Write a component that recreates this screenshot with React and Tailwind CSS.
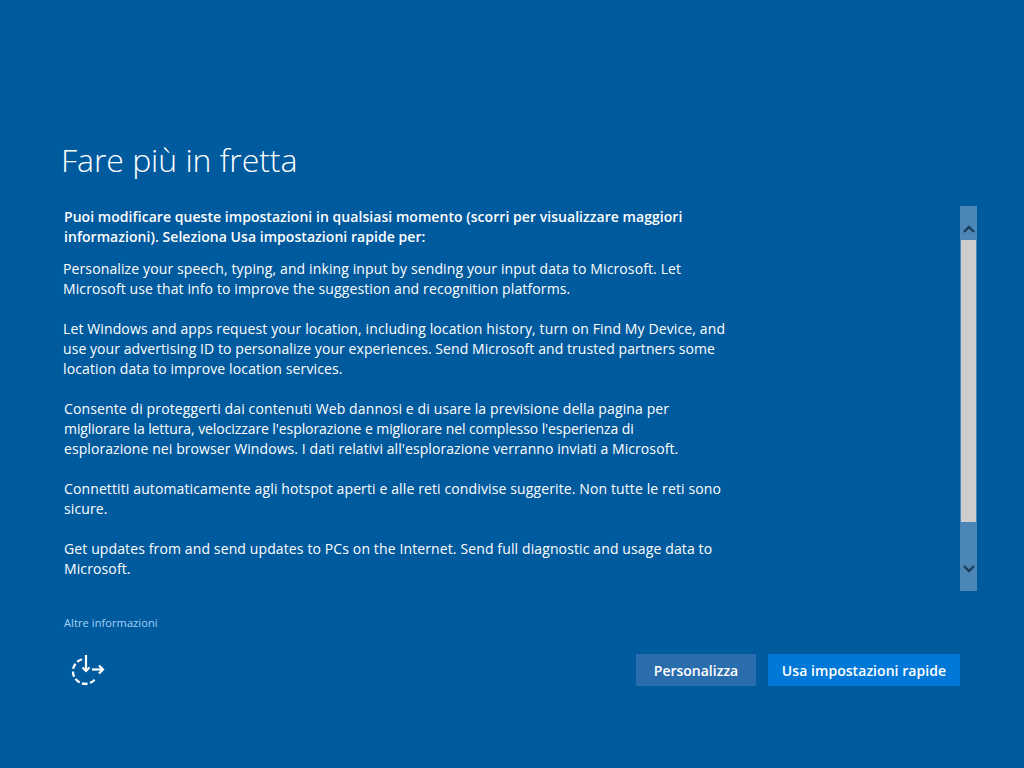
const font = { fontFamily: '"Open Sans", "Noto Sans", sans-serif' };

function ScrollBar() {
  return (
    <div className="w-[17px] h-[385px] bg-[#4c86b6] flex flex-col items-center shrink-0">
      <div className="h-[34px] w-full flex items-center justify-center pt-[12px]">
        <svg width="12" height="8" viewBox="0 0 12 8" fill="none"><path d="M1 7 L6 2 L11 7" stroke="#1c3c5c" strokeWidth="2.4" /></svg>
      </div>
      <div className="w-[15px] h-[282px] bg-[#cdcdcd]" />
      <div className="flex-1 w-full flex items-center justify-center pt-[25px]">
        <svg width="12" height="8" viewBox="0 0 12 8" fill="none"><path d="M1 1 L6 6 L11 1" stroke="#1c3c5c" strokeWidth="2.4" /></svg>
      </div>
    </div>
  );
}

export default function App() {
  return (
    <div className="w-[1024px] h-[768px] bg-[#005a9e] text-white overflow-hidden flex flex-col pt-[138px] pl-[62px] pr-[47px]" style={font}>
      <h1 className="text-[32px] leading-[44px] font-light h-[68px] -ml-px tracking-[-0.05px]">Fare più in fretta</h1>
      <div className="flex justify-between items-start">
        <div className="w-[680px] pl-[2px] text-[14px] leading-[20px] tracking-[0.12px] pt-[1px]">
          <p className="font-semibold tracking-[0.05px] mb-[12px] whitespace-nowrap">Puoi modificare queste impostazioni in qualsiasi momento (scorri per visualizzare maggiori<br />informazioni). Seleziona Usa impostazioni rapide per:</p>
          <p className="mb-[20px] -ml-px whitespace-nowrap">Personalize your speech, typing, and inking input by sending your input data to Microsoft. Let<br />Microsoft use that info to improve the suggestion and recognition platforms.</p>
          <p className="mb-[20px] -ml-px whitespace-nowrap">Let Windows and apps request your location, including location history, turn on Find My Device, and<br /><span className="tracking-[0.07px]">use your advertising ID to personalize your experiences. Send Microsoft and trusted partners some</span><br />location data to improve location services.</p>
          <p className="mb-[20px] whitespace-nowrap">Consente di proteggerti dai contenuti Web dannosi e di usare la previsione della pagina per<br /><span className="tracking-[-0.08px]">migliorare la lettura, velocizzare l'esplorazione e migliorare nel complesso l'esperienza di</span><br /><span className="tracking-[0.08px]">esplorazione nei browser Windows. I dati relativi all'esplorazione verranno inviati a Microsoft.</span></p>
          <p className="mb-[20px] whitespace-nowrap">Connettiti automaticamente agli hotspot aperti e alle reti condivise suggerite. Non tutte le reti sono<br />sicure.</p>
          <p className="whitespace-nowrap">Get updates from and send updates to PCs on the Internet. Send full diagnostic and usage data to<br />Microsoft.</p>
        </div>
        <ScrollBar />
      </div>
      <a className="mt-[24px] ml-[2px] text-[11px] leading-[16px] tracking-[0.1px] text-[#a6d3f7]">Altre informazioni</a>
      <div className="flex justify-between items-center mt-[23px] pr-[17px] h-[32px]">
        <svg className="ml-[9px]" width="36" height="32" viewBox="0 0 36 32" fill="none" stroke="white" strokeWidth="2.2">
          <path d="M11 5.3 A12.5 12.5 0 1 0 25 24" strokeDasharray="5.5 2.5" />
          <path d="M15 1 V17" />
          <path d="M11.5 13.5 L15 17 L18.5 13.5" />
          <path d="M21 15.5 H32" />
          <path d="M28 11.5 L32 15.5 L28 19.5" />
        </svg>
        <div className="flex gap-[12px]">
          <button className="w-[120px] h-[32px] bg-[#2a6dad] text-[14px] font-semibold">Personalizza</button>
          <button className="w-[192px] h-[32px] bg-[#0078d7] text-[14px] font-semibold tracking-[0.05px]">Usa impostazioni rapide</button>
        </div>
      </div>
    </div>
  );
}
